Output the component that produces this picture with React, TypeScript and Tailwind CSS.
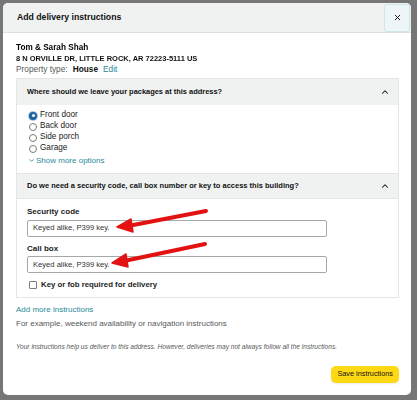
import { ChevronUp, ChevronDown, X } from "lucide-react";

const OPTIONS = ["Front door", "Back door", "Side porch", "Garage"];

function Radio({ checked }: { checked?: boolean }) {
  return checked ? (
    <span className="w-[8px] h-[8px] rounded-full bg-[#2162a1] flex items-center justify-center ring-1 ring-[#a6c8e6]">
      <span className="w-[3px] h-[3px] rounded-full bg-white" />
    </span>
  ) : (
    <span className="w-[8px] h-[8px] rounded-full border border-[#7a7d7d] bg-white" />
  );
}

function Field({ label }: { label: string }) {
  return (
    <div className="flex flex-col">
      <span className="text-[8px] leading-[11px] font-bold text-[#1a1c1c]">{label}</span>
      <div className="mt-[2.5px] w-[300px] h-[17px] border border-[#a5a8a8] rounded-[2px] flex items-center pl-[5px] text-[7.6px] text-[#333]">
        Keyed alike, P399 key.
      </div>
    </div>
  );
}

export default function App() {
  return (
    <div className="relative w-[417px] h-[400px] bg-[#767676] pt-[3px] pl-[3px] font-['Liberation_Sans',Arial,sans-serif] text-[#0f1111]">
      <div className="w-[408px] h-[392px] bg-white rounded-[5px] overflow-hidden flex flex-col">
        {/* Header */}
        <div className="h-[30px] shrink-0 bg-[#f0f2f2] border-b border-[#dde0e0] flex items-center pl-[14px] pr-[1px]">
          <span className="text-[8.7px] font-bold">Add delivery instructions</span>
          <button className="ml-auto w-[26px] h-[28px] border border-[#cde6ea] rounded-[3px] bg-[#eef5f6] flex items-center justify-center">
            <X className="w-[9px] h-[9px] text-[#0f1111]" strokeWidth={2.5} />
          </button>
        </div>

        {/* Body */}
        <div className="flex flex-col pl-[13px] pr-[12px] pt-[9px]">
          <div className="text-[8.2px] leading-[11px] font-bold blur-[0.45px] text-black">Tom &amp; Sarah Shah</div>
          <div className="text-[7.5px] leading-[11px] font-bold blur-[0.45px] text-[#111]">
            8 N ORVILLE DR, LITTLE ROCK, AR 72223-5111 US
          </div>
          <div className="text-[8.3px] leading-[11px] flex gap-[5px]">
            <span className="text-[#565959]">Property type:</span>
            <span className="font-bold">House</span>
            <span className="text-[#2a8a99]">Edit</span>
          </div>

          {/* Panel */}
          <div className="mt-[3px] border border-[#e3e6e6] flex flex-col">
            <div className="h-[26px] bg-[#f0f2f2] flex items-center pl-[10px] pr-[8px]">
              <span className="text-[7.45px] font-bold">Where should we leave your packages at this address?</span>
              <ChevronUp className="ml-auto w-[10px] h-[10px]" strokeWidth={2.5} />
            </div>
            <div className="flex flex-col pl-[12px] pt-[5px] pb-[7px]">
              {OPTIONS.map((o, i) => (
                <div key={o} className="h-[11px] flex items-center gap-[3px] text-[8.2px]">
                  <Radio checked={i === 0} />
                  <span className="text-[#222]">{o}</span>
                </div>
              ))}
              <div className="h-[11px] flex items-center gap-[1px] text-[8px] text-[#2a8a99] mt-[1px]">
                <ChevronDown className="w-[7px] h-[7px] -ml-[1px]" strokeWidth={3} />
                <span>Show more options</span>
              </div>
            </div>
            <div className="h-[26px] bg-[#f0f2f2] border-y border-[#e3e6e6] flex items-center pl-[10px] pr-[8px]">
              <span className="text-[7.5px] font-bold">Do we need a security code, call box number or key to access this building?</span>
              <ChevronUp className="ml-auto w-[10px] h-[10px]" strokeWidth={2.5} />
            </div>
            <div className="flex flex-col pl-[10px] pt-[7px] pb-[7px]">
              <Field label="Security code" />
              <div className="mt-[6px]">
                <Field label="Call box" />
              </div>
              <div className="mt-[6px] h-[11px] flex items-center gap-[4px] pl-[2px]">
                <span className="w-[8px] h-[8px] border border-[#7a7d7d] rounded-[1px] bg-white" />
                <span className="text-[7.8px] font-bold text-[#222]">Key or fob required for delivery</span>
              </div>
            </div>
          </div>

          <div className="mt-[6px] text-[8px] leading-[11px] text-[#2a8a99]">Add more instructions</div>
          <div className="mt-[3px] text-[8px] leading-[11px] text-[#565959]">
            For example, weekend availability or navigation instructions
          </div>
          <div className="mt-[13px] text-[6.6px] leading-[9px] italic text-[#565959]">
            Your instructions help us deliver to this address. However, deliveries may not always follow all the instructions.
          </div>
          <div className="mt-[15px] flex justify-end">
            <button className="h-[17px] px-[6px] rounded-[5px] bg-[#ffd814] text-[7.3px] text-[#0f1111] shadow-[0_1px_2px_rgba(213,217,217,0.6)]">
              Save instructions
            </button>
          </div>
        </div>
      </div>

      {/* Red annotation arrows */}
      <svg className="absolute inset-0 pointer-events-none" width="417" height="400" viewBox="0 0 417 400">
        <g fill="#e31212" stroke="#e31212" strokeLinecap="round" strokeLinejoin="round">
          <line x1="206" y1="211" x2="128" y2="226" strokeWidth="4" />
          <polygon points="117,227 131,219 133,232" strokeWidth="1.5" />
          <line x1="205" y1="244" x2="124" y2="261" strokeWidth="4" />
          <polygon points="112,263 126,254 128,267" strokeWidth="1.5" />
        </g>
      </svg>
    </div>
  );
}
